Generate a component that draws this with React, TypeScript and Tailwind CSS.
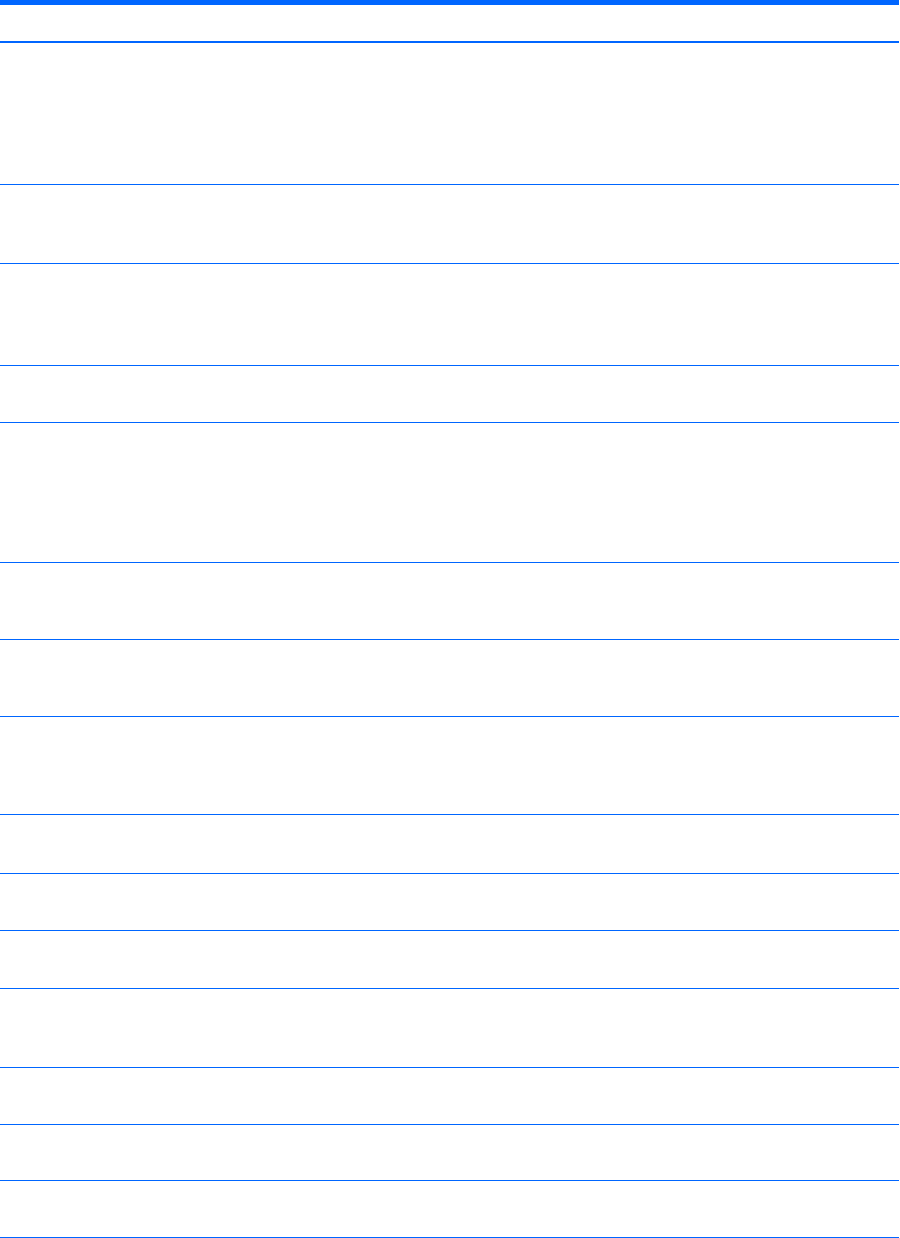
import React from 'react';

// row heights include the 1px bottom rule
const rowHeights = [
  'h-[142px]',
  'h-[79px]',
  'h-[102px]',
  'h-[57px]',
  'h-[140px]',
  'h-[77px]',
  'h-[77px]',
  'h-[98px]',
  'h-[59px]',
  'h-[57px]',
  'h-[58px]',
  'h-[79px]',
  'h-[57px]',
  'h-[56px]',
  'h-[57px]',
];

export default function App() {
  return (
    <div className="min-h-[1238px] w-[900px] bg-white font-['Liberation_Sans',Arial,sans-serif] text-sm text-gray-900">
      <div className="w-[899px]">
        <div className="h-[5px] bg-[#0066ff]" />
        <div className="h-[38px] border-b-2 border-[#0066ff]" />
        {rowHeights.map((h, i) => (
          <div key={i} className={`${h} border-b border-[#0066ff]`} />
        ))}
      </div>
    </div>
  );
}
